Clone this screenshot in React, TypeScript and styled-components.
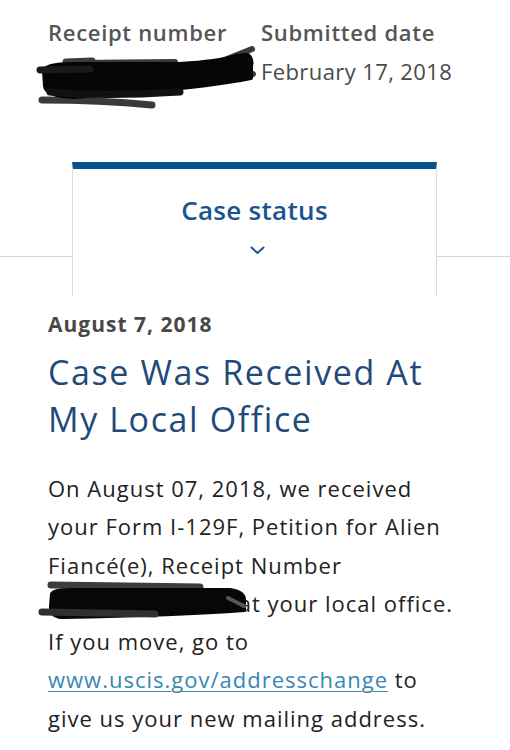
import React from "react";
import styled, { createGlobalStyle } from "styled-components";

const Global = createGlobalStyle`
  html, body { margin: 0; padding: 0; background: #fff; }
  body { font-family: "Open Sans", "Liberation Sans", sans-serif; -webkit-font-smoothing: antialiased; }
`;

const Page = styled.div`
  width: 510px;
  height: 750px;
  overflow: hidden;
  background: #fff;
`;

const Summary = styled.div`
  display: grid;
  grid-template-columns: 213px 1fr;
  padding: 16px 0 0 48px;
  height: 162px;
  box-sizing: border-box;
`;

const Field = styled.div`
  display: flex;
  flex-direction: column;
`;

const Label = styled.div`
  font-size: 22px;
  font-weight: 600;
  color: #555;
  line-height: 32px;
  letter-spacing: 0.7px;
  white-space: nowrap;
`;

const Value = styled.div`
  position: relative;
  margin-top: 4px;
  font-size: 22px;
  color: #4a4a4a;
  line-height: 38px;
  height: 38px;
  letter-spacing: 0.4px;
  white-space: nowrap;
`;

const Scribble = styled.svg<{ $left: number; $top: number }>`
  position: absolute;
  left: ${(p) => p.$left}px;
  top: ${(p) => p.$top}px;
  overflow: visible;
  pointer-events: none;
`;

const TabsRow = styled.div`
  display: flex;
  align-items: flex-start;
`;

const Rule = styled.div<{ $width?: number }>`
  flex: ${(p) => (p.$width ? `0 0 ${p.$width}px` : "1 1 auto")};
  height: 94px;
  border-bottom: 1px solid #d6d6d6;
`;

const Tab = styled.div`
  flex: 0 0 365px;
  height: 134px;
  box-sizing: border-box;
  border-top: 7px solid #0b4f8f;
  border-left: 1px solid #dcdcdc;
  border-right: 1px solid #dcdcdc;
  display: flex;
  flex-direction: column;
  align-items: center;
  padding-top: 25px;
`;

const TabTitle = styled.div`
  font-size: 26px;
  font-weight: 600;
  color: #1a5490;
  line-height: 32px;
  letter-spacing: 0.3px;
`;

const Chevron = styled.svg`
  margin-top: 20px;
  margin-left: 6px;
`;

const Content = styled.div`
  padding: 13px 0 0 48px;
`;

const DateLine = styled.div`
  font-size: 21px;
  font-weight: 700;
  color: #484848;
  line-height: 30px;
  letter-spacing: 1px;
`;

const Heading = styled.h1`
  margin: 10px 0 0 0;
  font-size: 34px;
  font-weight: 400;
  color: #1f4a7a;
  line-height: 47px;
  letter-spacing: 1.6px;
`;

const Body = styled.p`
  margin: 26px 0 0 0;
  font-size: 22px;
  color: #222;
  line-height: 38.3px;
  letter-spacing: 1px;
  white-space: nowrap;
`;

const Redacted = styled.span`
  position: relative;
  display: inline-block;
  width: 184px;
  height: 20px;
`;

const Link = styled.a`
  color: #3a87b3;
  text-decoration: underline;
  text-decoration-thickness: 1px;
  text-underline-offset: 3px;
`;

type Stroke = { d: string; sw?: number; c: string; fill?: boolean };

const Marker = ({ paths, left, top, w, h }: { paths: Stroke[]; left: number; top: number; w: number; h: number }) => (
  <Scribble $left={left} $top={top} width={w} height={h} viewBox={`0 0 ${w} ${h}`}>
    {paths.map((p, i) =>
      p.fill ? (
        <path key={i} d={p.d} fill={p.c} stroke={p.c} strokeWidth={4} strokeLinejoin="round" />
      ) : (
        <path key={i} d={p.d} stroke={p.c} strokeWidth={p.sw} fill="none" strokeLinecap="round" strokeLinejoin="round" />
      )
    )}
  </Scribble>
);

export default function App() {
  return (
    <Page>
      <Global />
      <Summary>
        <Field>
          <Label>Receipt number</Label>
          <Value>
            <Marker
              left={-18}
              top={-10}
              w={240}
              h={75}
              paths={[
                { d: "M36 20 L62 19", sw: 7, c: "#3d3d3d" },
                { d: "M44 21 L145 20", sw: 6, c: "#3a3a3a" },
                { d: "M187 21 L222 7", sw: 6, c: "#3a3a3a" },
                { d: "M198 30 L223 32", sw: 6, c: "#3a3a3a" },
                { d: "M12 58 Q70 58 122 63", sw: 7, c: "#3a3a3a" },
                { d: "M14 29 Q16 22 42 22 L150 22 Q188 20 206 14 L218 13 Q223 17 221 25 L221 36 Q180 44 120 49 L44 55 Q16 54 15 44 Z", c: "#060606", fill: true },
                { d: "M10 28 L60 27", sw: 7, c: "#1a1a1a" },
                { d: "M20 50 Q70 55 150 50", sw: 7, c: "#111" },
              ]}
            />
          </Value>
        </Field>
        <Field>
          <Label>Submitted date</Label>
          <Value>February 17, 2018</Value>
        </Field>
      </Summary>
      <TabsRow>
        <Rule $width={72} />
        <Tab>
          <TabTitle>Case status</TabTitle>
          <Chevron width="15" height="9" viewBox="0 0 15 9">
            <path d="M1.5 1.5 L7.5 7 L13.5 1.5" stroke="#1a5490" strokeWidth="2" fill="none" strokeLinecap="round" strokeLinejoin="round" />
          </Chevron>
        </Tab>
        <Rule />
      </TabsRow>
      <Content>
        <DateLine>August 7, 2018</DateLine>
        <Heading>
          Case Was Received At
          <br />
          My Local Office
        </Heading>
        <Body>
          On August 07, 2018, we received
          <br />
          your Form I-129F, Petition for Alien
          <br />
          Fiancé(e), Receipt Number
          <br />
          <Redacted>
            <Marker
              left={-18}
              top={-22}
              w={220}
              h={60}
              paths={[
                { d: "M21 15 L170 17", sw: 7, c: "#3c3c3c" },
                { d: "M22 24 Q24 20 40 20 L200 20 Q214 22 214 30 L214 40 Q150 45 32 47 Q20 46 21 36 Z", c: "#070707", fill: true },
                { d: "M12 42 L125 44", sw: 7, c: "#303030" },
                { d: "M198 28 L214 36", sw: 4, c: "#555" },
              ]}
            />
          </Redacted>
          {" "}at your local office.
          <br />
          If you move, go to
          <br />
          <Link href="#">www.uscis.gov/addresschange</Link> to
          <br />
          give us your new mailing address.
        </Body>
      </Content>
    </Page>
  );
}
